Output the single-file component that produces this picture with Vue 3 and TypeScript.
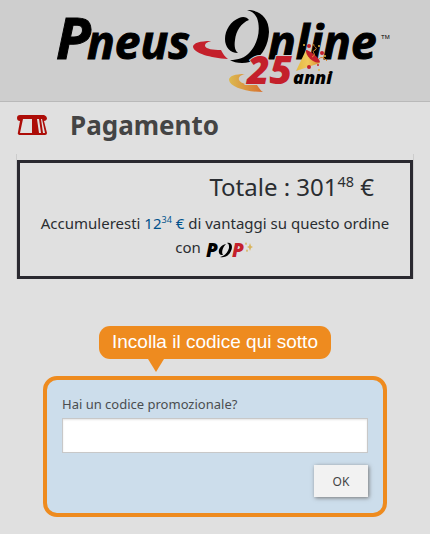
<script setup lang="ts">
import { ref } from 'vue'

const code = ref('')
const total = { units: '301', cents: '48' }
const reward = { units: '12', cents: '34' }
</script>

<template>
  <div class="page">
    <header class="masthead">
      <svg class="logo" viewBox="52 0 344 94" role="img" aria-label="Pneus Online">
        <defs>
          <linearGradient id="gold" x1="0" y1="0" x2="1" y2="0">
            <stop offset="0" stop-color="#dcb94f" />
            <stop offset="1" stop-color="#d8702e" />
          </linearGradient>
          <linearGradient id="cone" x1="0" y1="0" x2="1" y2="0">
            <stop offset="0" stop-color="#e3b843" />
            <stop offset="0.5" stop-color="#f0c95c" />
            <stop offset="1" stop-color="#d98a30" />
          </linearGradient>
        </defs>
        <g class="brand">
          <text x="56" y="59" font-size="57">P</text>
          <text x="87" y="59" font-size="46">neus</text>
          <text x="268" y="59" font-size="46">nline</text>
        </g>
        <path fill="#c4202b" d="M211 41C200 41 193 43 193 47C194 53 210 58 228 59C225 57 223 54 221 50C213 50 206 49 205 46C205 43 208 42 211 41Z" />
        <path d="M247 10C259 10 269 17 269 32C268 50 258 63 242 63C237 63 233 62 230 60C238 60 245 58 250 52C258 43 261 29 257 18C255 14 252 11 247 10Z" />
        <path d="M249 20C247 17 243 16 239 18C231 21 225 30 225 39C225 47 230 53 238 53C235 51 234 46 235 40C236 31 241 23 249 20Z" />
        <path fill="url(#gold)" d="M245 74C235 74 229 76 229 80C230 87 246 92 263 92C261 91 259 88 257 85C249 85 241 84 239 80C238 77 241 75 245 74Z" />
        <text class="years" x="247" y="84" font-size="39">25</text>
        <text class="anni" x="293" y="84" font-size="18">anni</text>
        <path fill="url(#cone)" d="M296 71L306 50Q315 56 320 63Z" />
        <path fill="#c4202b" d="M306 50C309 50 319 57 320 62C315 65 305 56 306 50Z" />
        <path class="ribbon" d="M312 57C318 54 310 52 315 50C319 48 312 46 314 44" />
        <path class="ribbon" d="M319 59Q322 55 327 61" />
        <g fill="#c4202b">
          <circle cx="309" cy="46" r="2" /><circle cx="322" cy="53" r="2" />
          <circle cx="309" cy="67" r="2" /><circle cx="318" cy="65" r="1" />
        </g>
        <g fill="#e6b940">
          <circle cx="304" cy="45" r="1" /><circle cx="319" cy="46" r="1" />
          <circle cx="325" cy="56" r="1" /><circle cx="319" cy="70" r="1" />
        </g>
        <text class="tm" x="381" y="39" font-size="6">TM</text>
      </svg>
    </header>

    <main>
      <h1>
        <svg class="till" viewBox="0 0 30 22" aria-hidden="true">
          <path fill="#ad0d08" fill-rule="evenodd" d="M3 1H27Q30 2 30 5Q29 7 27 7L30 19Q30 21 28 21H2Q0 20 1 18L3 7Q0 7 0 4Q0 1 3 1ZM6 5L3 19H15V5ZM20 5L22 19H24L22 5ZM24 5L26 19H28L25 5Z" />
        </svg>
        Pagamento
      </h1>

      <section class="frame">
        <div class="summary">
          <p class="total">Totale : {{ total.units }}<sup>{{ total.cents }}</sup> €</p>
          <p class="benefit">
            Accumuleresti <span class="reward">{{ reward.units }}<sup>{{ reward.cents }}</sup> €</span> di vantaggi su questo ordine con
            <svg class="pop" viewBox="0 -4 50 28" role="img" aria-label="POP">
              <text class="pop-text" x="1" y="18" font-size="19">P</text>
              <path d="M22 4C27 3 28 8 26 12C24 17 19 19 15 18C20 17 23 13 24 9C24 6 24 5 22 4Z" />
              <path d="M21 5C16 6 13 10 14 14C15 16 16 16 18 16C16 13 18 8 21 5Z" />
              <text class="pop-text red" x="27" y="18" font-size="19">P</text>
              <path fill="#d9b45c" d="M45 4L46 7L48 8L46 9L45 12L44 9L42 8L44 7ZM41 3L42 5L41 6L40 5ZM42 10L43 12L42 13L41 12Z" />
            </svg>
          </p>
        </div>
      </section>

      <div class="promo">
        <div class="hint">Incolla il codice qui sotto</div>
        <form class="coupon" @submit.prevent>
          <label for="promo-code">Hai un codice promozionale?</label>
          <input id="promo-code" v-model="code" type="text" autocomplete="off" />
          <button type="submit">OK</button>
        </form>
      </div>
    </main>
  </div>
</template>

<style>
body {
  background: #e0e0e0;
}
</style>

<style scoped>
.page {
  color: #2a2d31;
  font-family: "Trebuchet MS", "Noto Sans", sans-serif;
}

.masthead {
  display: flex;
  justify-content: center;
  padding: 0 16px 7px;
  background: #cecece;
  border-bottom: 1px solid #b9b9b9;
}

.logo {
  width: 344px;
  max-width: 100%;
  margin-left: 18px;
}

.brand,
.years,
.anni {
  font-family: "Open Sans", sans-serif;
  font-style: italic;
  font-weight: 700;
}

.brand {
  stroke: #000;
  stroke-width: 1px;
}

.years,
.anni {
  font-weight: 800;
}

.years {
  fill: #c4202b;
  stroke: #cecece;
  stroke-width: 2px;
  paint-order: stroke;
}

.tm {
  font-family: "Liberation Sans", sans-serif;
}

.ribbon {
  fill: none;
  stroke: #e08a30;
  stroke-width: 1px;
}

main {
  padding: 0 16px 17px;
}

h1 {
  display: flex;
  align-items: center;
  gap: 23px;
  margin: 0;
  padding: 6px 0 12px 1px;
  color: #444;
  font-size: 26px;
  line-height: 34px;
}

.till {
  width: 30px;
  height: 22px;
}

.frame {
  padding-top: 6px;
  border: solid #ccc;
  border-width: 0 1px;
}

.summary {
  padding: 8px 12px 17px;
  border: 3px solid #2a2930;
}

p {
  margin: 0;
}

sup {
  font-size: 60%;
  line-height: 0;
}

.total {
  padding-right: 24px;
  font-size: 24px;
  line-height: 32px;
  text-align: right;
}

.benefit {
  padding-top: 8px;
  font-size: 15px;
  line-height: 24px;
  text-align: center;
}

.reward {
  color: #00528c;
}

.pop {
  width: 50px;
  height: 28px;
  margin: -4px 0;
  vertical-align: -6px;
}

.pop-text {
  font-family: "Open Sans", sans-serif;
  font-style: italic;
  font-weight: 800;
}

.red {
  fill: #c4202b;
}

.promo {
  padding: 47px 27px 0;
}

.hint {
  position: relative;
  width: fit-content;
  margin: 0 0 17px 56px;
  padding: 0 13px;
  border-radius: 11px;
  background: #ee8b1f;
  color: #fff;
  font: 19px/32px "Liberation Sans", sans-serif;
  padding-bottom: 1px;
}

.hint::after {
  position: absolute;
  top: 100%;
  left: 49px;
  border: solid transparent;
  border-width: 13px 8px 0;
  border-top-color: #ee8b1f;
  content: "";
}

.coupon {
  display: flex;
  flex-direction: column;
  padding: 12px 15px 16px;
  border: 4px solid #ee8b1f;
  border-radius: 14px;
  background: #ccddeb;
}

label {
  color: #4a4d50;
  font-size: 13px;
  line-height: 24px;
}

input {
  height: 33px;
  margin: 2px 0 12px;
  padding: 0 8px;
  border: 1px solid #c8c8c8;
  border-radius: 0;
  background: #fff;
  box-shadow: inset 0 1px 2px #e5e5e5;
  font: inherit;
}

button {
  align-self: flex-end;
  width: 54px;
  height: 32px;
  padding: 0;
  border: 0;
  background: #f2f2f2;
  box-shadow: 1px 1px 4px #777;
  color: #444;
  font: 12px "Noto Sans", sans-serif;
}
</style>
